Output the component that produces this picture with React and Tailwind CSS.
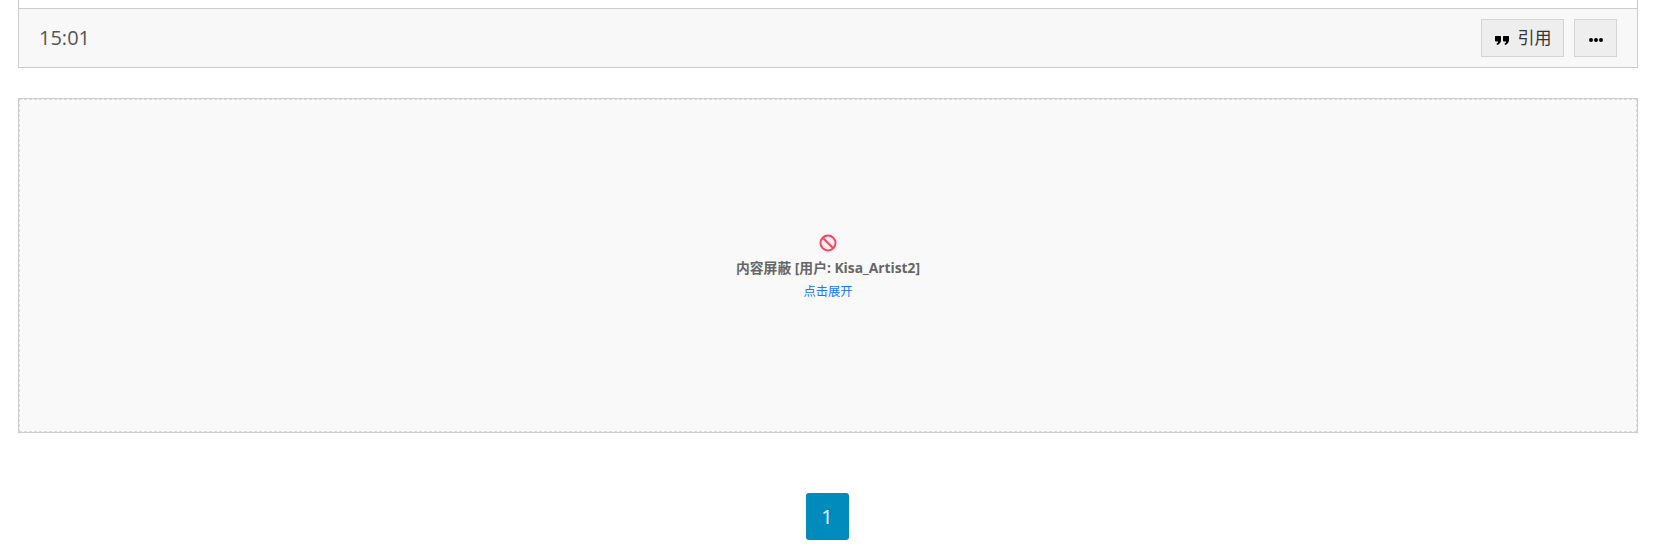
import React from 'react';

const fontStack = "font-['Open_Sans','Noto_Sans_CJK_SC',sans-serif]";

const QuoteIcon = () => (
  <svg width="14" height="9" viewBox="0 0 14 10" preserveAspectRatio="none" className="block mt-[4px]">
    <path d="M0 .6C0 .3.3 0 .6 0h4.800C5.700 0 6 .3 6 .6v3.900C6 7.200 4.600 9.200 2.200 10L1.300 8.700C2.400 8.200 3 7.400 3.100 6H.6C.3 6 0 5.700 0 5.400z" fill="#000" />
    <path d="M8 .6C8 .3 8.300 0 8.600 0h4.800C13.700 0 14 .3 14 .6v3.900C14 7.200 12.600 9.200 10.200 10L9.300 8.700C10.400 8.200 11 7.400 11.100 6H8.600C8.300 6 8 5.700 8 5.400z" fill="#000" />
  </svg>
);

const BlockIcon = () => (
  <svg width="18" height="18" viewBox="0 0 18 18" className="block">
    <circle cx="9" cy="9" r="7.500" fill="#fdeef2" stroke="#f9475f" strokeWidth="2" />
    <path d="M4 4l10 10" stroke="#f9475f" strokeWidth="2" />
  </svg>
);

const PostFooter = () => (
  <div className="border border-[#cccccc] bg-[#f8f8f8] h-[60px] flex items-center justify-between pl-[20px] pr-[20px]">
    <span className="text-[20px] text-[#555555]">15:01</span>
    <div className="flex items-center gap-[10px]">
      <button className="h-[38px] w-[83px] border border-[#d4d4d4] bg-[#eeeeee] flex items-center justify-center gap-[9px] pl-[1px] text-[17px] text-[#333333]">
        <QuoteIcon />
        <span>引用</span>
      </button>
      <button className="h-[38px] w-[43px] border border-[#d4d4d4] bg-[#eeeeee] flex items-center justify-center gap-[1px] pt-[4px]">
        <span className="w-[4px] h-[4px] rounded-full bg-black" />
        <span className="w-[4px] h-[4px] rounded-full bg-black" />
        <span className="w-[4px] h-[4px] rounded-full bg-black" />
      </button>
    </div>
  </div>
);

const BlockedPost = () => (
  <div className="mt-[30px] border border-[#cccccc]">
    <div className="h-[333px] border border-dashed border-[#dddddd] bg-[#f9f9f9] flex flex-col items-center justify-center pt-[3px]">
      <BlockIcon />
      <div className="mt-[6px] text-[13.8px] leading-[19px] font-bold text-[#666666]">内容屏蔽 [用户: Kisa_Artist2]</div>
      <a className="mt-[7px] text-[12.300px] leading-[16px] text-[#1677ff]">点击展开</a>
    </div>
  </div>
);

export default function App() {
  return (
    <div className={`${fontStack} bg-white h-[560px] pl-[18px] pr-[15px] overflow-hidden`}>
      <div className="h-[8px] border-x border-[#cccccc]" />
      <PostFooter />
      <BlockedPost />
      <div className="mt-[60px] pr-[2px] flex justify-center">
        <a className="w-[43px] h-[47px] rounded-[3px] bg-[#008bbd] text-white text-[20px] font-normal flex items-center justify-center">1</a>
      </div>
    </div>
  );
}
